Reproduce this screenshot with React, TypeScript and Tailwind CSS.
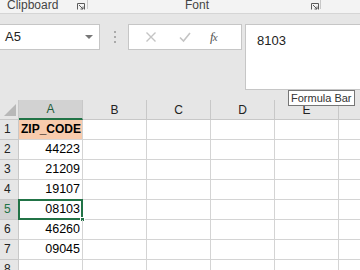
import React from "react";

const cols = ["A", "B", "C", "D", "E", "F"];
const rows: { n: number; v: string }[] = [
  { n: 1, v: "ZIP_CODE" },
  { n: 2, v: "44223" },
  { n: 3, v: "21209" },
  { n: 4, v: "19107" },
  { n: 5, v: "08103" },
  { n: 6, v: "46260" },
  { n: 7, v: "09045" },
  { n: 8, v: "" },
];

const Launcher = () => (
  <svg width="8" height="7" viewBox="0 0 8 7" className="text-[#5a5a5a]">
    <path d="M0.5 6.5V0.5H7.5V6.5" fill="none" stroke="currentColor" strokeWidth="1" />
    <path d="M2 2L6 6M6 3.5V6H3.5" fill="none" stroke="currentColor" strokeWidth="1" />
  </svg>
);

const App = () => {
  return (
    <div
      className="w-[360px] h-[270px] overflow-hidden bg-white relative"
      style={{ fontFamily: '"Liberation Sans", Arial, sans-serif' }}
    >
      {/* ribbon group labels */}
      <div className="h-[14px] bg-[#f3f3f3] border-b border-[#d5d5d5] flex items-end overflow-hidden">
        <div className="w-[88px] h-full flex items-end relative">
          <span className="text-[12px] leading-[13px] text-[#444] ml-[7px] mb-[1px]">Clipboard</span>
          <div className="absolute left-[77px] top-[3px]"><Launcher /></div>
          <div className="absolute right-0 top-0 h-[9px] w-px bg-[#c8c8c8]" />
        </div>
        <div className="w-[233px] h-full flex items-end relative">
          <span className="text-[12px] leading-[13px] text-[#444] ml-[97px] mb-[1px]">Font</span>
          <div className="absolute left-[223px] top-[3px]"><Launcher /></div>
          <div className="absolute right-0 top-0 h-[9px] w-px bg-[#c8c8c8]" />
        </div>
      </div>

      {/* formula bar */}
      <div className="h-[86px] bg-[#e6e6e6] flex items-start pt-[10px]">
        <div className="w-[100px] h-[26px] bg-white border border-[#c6c6c6] border-l-0 flex items-center justify-between">
          <span className="text-[13px] text-[#222] ml-[5px]">A5</span>
          <svg width="8" height="4" viewBox="0 0 8 4" className="mr-[6px]">
            <path d="M0 0H8L4 4Z" fill="#777" />
          </svg>
        </div>
        <div className="w-[27px] h-[26px] flex flex-col items-center justify-center gap-[3px] ml-px">
          <div className="w-[2px] h-[2px] bg-[#aaa]" />
          <div className="w-[2px] h-[2px] bg-[#aaa]" />
          <div className="w-[2px] h-[2px] bg-[#aaa]" />
        </div>
        <div className="w-[114px] h-[26px] bg-white border border-[#c6c6c6] flex items-center">
          <svg width="12" height="12" viewBox="0 0 12 12" className="ml-[16px]">
            <path d="M1.5 1.5L10.5 10.5M10.5 1.5L1.5 10.5" stroke="#c4c4c4" strokeWidth="1.4" />
          </svg>
          <svg width="12" height="12" viewBox="0 0 12 12" className="ml-[22px]">
            <path d="M1 6.5L4.5 10L11 2" fill="none" stroke="#c4c4c4" strokeWidth="1.6" />
          </svg>
          <span
            className="ml-[19px] text-[13px] italic text-[#555] tracking-[-1px]"
            style={{ fontFamily: '"Liberation Serif", "Times New Roman", serif' }}
          >
            f<span className="text-[11px]">x</span>
          </span>
        </div>
        <div className="ml-[3px] flex-1 h-[66px] bg-white border border-[#c6c6c6] border-r-0">
          <span className="block text-[13px] text-[#222] ml-[11px] mt-[6px]">8103</span>
        </div>
      </div>

      {/* column headers */}
      <div className="flex h-[20px] bg-[#e6e6e6]">
        <div className="w-[19px] shrink-0 border-r border-b border-[#c8c8c8] relative">
          <svg width="14" height="14" viewBox="0 0 14 14" className="absolute left-[3px] top-[3px]">
            <path d="M13 1V13H1Z" fill="#b8b8b8" />
          </svg>
        </div>
        {cols.map((c) => (
          <div
            key={c}
            className={
              c === "A"
                ? "w-[64px] shrink-0 border-r border-[#c8c8c8] border-b-2 border-b-[#217346] bg-[#d2d2d2] flex items-center justify-center text-[12px] text-[#1e5b3a]"
                : "w-[64px] shrink-0 border-r border-b border-[#c8c8c8] flex items-center justify-center text-[12px] text-[#222]"
            }
          >
            {c === "F" ? "" : c}
          </div>
        ))}
      </div>

      {/* rows */}
      {rows.map((r) => (
        <div key={r.n} className="flex h-[20px]">
          <div
            className={
              r.n === 5
                ? "w-[19px] shrink-0 bg-[#d2d2d2] border-r border-b border-[#c8c8c8] text-[12px] text-[#217346] pl-[4px] leading-[19px]"
                : "w-[19px] shrink-0 bg-[#e6e6e6] border-r border-b border-[#c8c8c8] text-[12px] text-[#222] pl-[4px] leading-[19px]"
            }
          >
            {r.n}
          </div>
          <div
            className={
              r.n === 1
                ? "w-[64px] shrink-0 bg-[#f8cbad] border-r border-b border-[#d4d4d4] text-[12px] font-bold text-black pl-[2px] leading-[19px] relative"
                : "w-[64px] shrink-0 border-r border-b border-[#d4d4d4] text-[12.5px] text-black text-right pr-[2px] leading-[19px] relative"
            }
          >
            {r.v}
            {r.n === 5 && (
              <>
                <div className="absolute -left-[1px] -top-[1px] -right-[1px] -bottom-[1px] border-2 border-[#217346]" />
                <div className="absolute -right-[3px] -bottom-[3px] w-[5px] h-[5px] bg-[#217346] border border-white" />
              </>
            )}
          </div>
          {cols.slice(1).map((c) => (
            <div key={c} className="w-[64px] shrink-0 border-r border-b border-[#d4d4d4]" />
          ))}
        </div>
      ))}

      {/* tooltip */}
      <div className="absolute left-[288px] top-[90px] h-[16px] px-[2px] bg-white border border-[#767676] text-[11px] leading-[14px] text-[#333] whitespace-nowrap">
        Formula Bar
      </div>
    </div>
  );
};

export default App;
